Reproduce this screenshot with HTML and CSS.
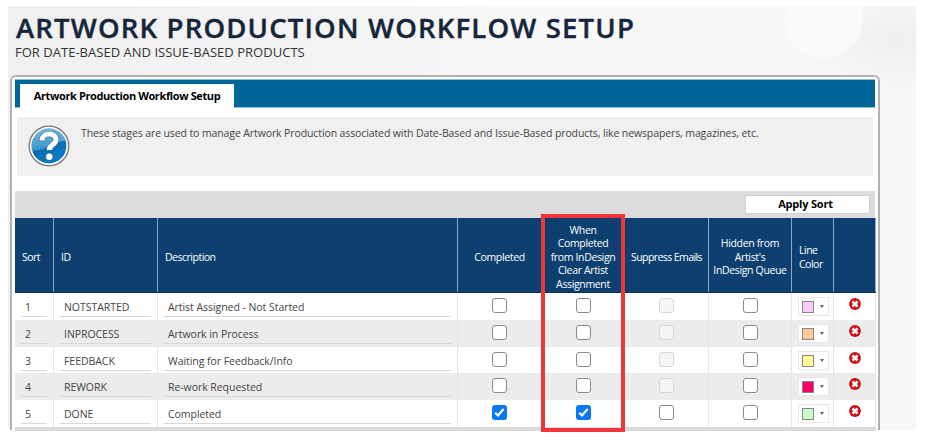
FILE: index.html
```
<!DOCTYPE html>
<html lang="en">
<head>
<meta charset="utf-8">
<title>Artwork Production Workflow Setup</title>
<link rel="stylesheet" href="styles.css">
</head>
<body>
<svg class="defs" width="0" height="0" aria-hidden="true">
  <symbol id="del" viewBox="0 0 12 12"><circle cx="6" cy="6" r="5.9" fill="#cf0d12"/><path d="M3.500 3.500 8.500 8.500M8.500 3.500 3.500 8.500" stroke="#fff" stroke-width="2.500"/></symbol>
  <symbol id="chk" viewBox="0 0 15 15"><path d="M3.2 7.8 6 10.5 11.6 4" fill="none" stroke="#fff" stroke-width="2.2"/></symbol>
</svg>
<main class="stage">
  <h1 class="title">ARTWORK PRODUCTION WORKFLOW SETUP</h1>
  <p class="subtitle">FOR DATE-BASED AND ISSUE-BASED PRODUCTS</p>
  <section class="panel">
    <nav class="tabs"><div class="tab"><span>Artwork Production Workflow Setup</span></div></nav>
    <div class="info">
      <svg class="help" viewBox="0 0 42 42">
        <defs>
          <linearGradient id="hg" x1="0" y1="0" x2="0.6" y2="1"><stop offset="0" stop-color="#2583c4"/><stop offset="0.5" stop-color="#0868b1"/><stop offset="1" stop-color="#0d7cc8"/></linearGradient>
          <linearGradient id="gl" x1="0" y1="0" x2="0" y2="1"><stop offset="0" stop-color="#8fd0ee"/><stop offset="1" stop-color="#4a9fd2"/></linearGradient>
        </defs>
        <circle cx="21" cy="21" r="19.8" fill="#fff" stroke="#747474" stroke-width="1.3"/>
        <circle cx="21" cy="21" r="17.4" fill="url(#hg)"/>
        <path d="M3.7 23A17.4 17.4 0 0 1 37.6 16C29 15.500 22 24 3.700 26Z" fill="url(#gl)" opacity=".75"/>
        <path d="M14 16C14 7 28.500 7 28 14.800C27.800 19.500 21.300 19.500 21.300 25.500" fill="none" stroke="#4b6b85" stroke-width="6.400"/>
        <circle cx="21.300" cy="32" r="3.800" fill="#4b6b85"/>
        <path d="M14 15.500C14 7 28.500 7 28 14.800C27.800 19.500 21.300 19.500 21.300 25" fill="none" stroke="#fff" stroke-width="5"/>
        <circle cx="21.300" cy="31.800" r="3.200" fill="#fff"/>
      </svg>
      <p>These stages are used to manage Artwork Production associated with Date-Based and Issue-Based products, like newspapers, magazines, etc.</p>
    </div>
    <div class="toolbar"><button class="apply">Apply Sort</button></div>
    <div class="grid">
      <div class="row head">
        <div>Sort</div><div>ID</div><div>Description</div>
        <div class="c">Completed</div>
        <div class="c">When<br>Completed<br>from InDesign<br>Clear Artist<br>Assignment</div>
        <div class="c">Suppress Emails</div>
        <div class="c">Hidden from<br>Artist's<br>InDesign Queue</div>
        <div>Line<br>Color</div><div></div>
      </div>
      <div class="row">
        <div><span class="field">1</span></div><div><span class="field">NOTSTARTED</span></div><div><span class="field">Artist Assigned - Not Started</span></div>
        <div class="c"><i class="box"></i></div><div class="c"><i class="box"></i></div><div class="c"><i class="box off"></i></div><div class="c"><i class="box"></i></div>
        <div class="pick"><span class="picker"><i class="swatch pink"></i><i class="arrow"></i></span></div><div class="c"><svg class="del"><use href="#del"/></svg></div>
      </div>
      <div class="row alt">
        <div><span class="field">2</span></div><div><span class="field">INPROCESS</span></div><div><span class="field">Artwork in Process</span></div>
        <div class="c"><i class="box"></i></div><div class="c"><i class="box"></i></div><div class="c"><i class="box off"></i></div><div class="c"><i class="box"></i></div>
        <div class="pick"><span class="picker"><i class="swatch orange"></i><i class="arrow"></i></span></div><div class="c"><svg class="del"><use href="#del"/></svg></div>
      </div>
      <div class="row short">
        <div><span class="field">3</span></div><div><span class="field">FEEDBACK</span></div><div><span class="field">Waiting for Feedback/Info</span></div>
        <div class="c"><i class="box"></i></div><div class="c"><i class="box"></i></div><div class="c"><i class="box off"></i></div><div class="c"><i class="box"></i></div>
        <div class="pick"><span class="picker"><i class="swatch yellow"></i><i class="arrow"></i></span></div><div class="c"><svg class="del"><use href="#del"/></svg></div>
      </div>
      <div class="row alt">
        <div><span class="field">4</span></div><div><span class="field">REWORK</span></div><div><span class="field">Re-work Requested</span></div>
        <div class="c"><i class="box"></i></div><div class="c"><i class="box"></i></div><div class="c"><i class="box off"></i></div><div class="c"><i class="box"></i></div>
        <div class="pick"><span class="picker"><i class="swatch red"></i><i class="arrow"></i></span></div><div class="c"><svg class="del"><use href="#del"/></svg></div>
      </div>
      <div class="row">
        <div><span class="field">5</span></div><div><span class="field">DONE</span></div><div><span class="field">Completed</span></div>
        <div class="c"><svg class="box on"><use href="#chk"/></svg></div><div class="c"><svg class="box on"><use href="#chk"/></svg></div><div class="c"><i class="box"></i></div><div class="c"><i class="box"></i></div>
        <div class="pick"><span class="picker"><i class="swatch green"></i><i class="arrow"></i></span></div><div class="c"><svg class="del"><use href="#del"/></svg></div>
      </div>
      <div class="foot"></div>
      <div class="highlight"></div>
    </div>
  </section>
</main>
</body>
</html>
```
FILE: styles.css
```
* { box-sizing: border-box; }
body { margin: 0; height: 448px; background: #fff; font-family: "Open Sans", "Noto Sans", sans-serif; color: #444; overflow: hidden; }
.defs { display: block; height: 0; }
.stage {
  width: 908px; height: 424px; margin: 6px 0 0 8px; padding-left: 2px;
  background:
    radial-gradient(circle 40px at 816px 14px, #fafafa 0 37px, transparent 40px),
    radial-gradient(ellipse 90px 50px at 890px 35px, #eeeeee, transparent),
    linear-gradient(90deg, #f0f0f0, #f3f3f3 30%, #f8f8f8 60%, #f7f7f7);
}
.title { margin: 0; padding: 4px 0 0 6px; height: 37px; font-size: 27.500px; line-height: 36px; font-weight: 600; letter-spacing: 1.180px; color: #16263a; -webkit-text-stroke: 0.400px #16263a; white-space: nowrap; }
.subtitle { margin: 0; padding-left: 5px; height: 32px; font-size: 13px; line-height: 18px; letter-spacing: 0.020px; color: #333; white-space: nowrap; }
.panel { width: 870px; height: 355px; background: #fff; border: 2px solid #b3b1b3; border-bottom: 0; border-radius: 6px 6px 0 0; padding: 2px 3px 0; }
.tabs { height: 29px; background: #006699; border: 1px solid #8fbcd5; border-left: 0; border-right: 0; padding: 4px 0 0 5px; display: flex; }
.tab { width: 214px; height: 24px; background: #fff; text-align: center; font-size: 11px; line-height: 24px; font-weight: 700; color: #000; letter-spacing: -0.390px; white-space: nowrap; }
.info { margin: 9px 2px 0; height: 59px; background: #f0f0f0; display: flex; padding: 8px 0 0 11px; font-size: 10.500px; }
.help { width: 42px; height: 42px; margin-right: 11px; flex: none; }
.info p { margin: 0; line-height: 17px; letter-spacing: -0.110px; white-space: nowrap; }
.toolbar { margin-top: 15px; height: 27px; background: #dcdcdc; padding: 4px 5px 0 0; display: flex; justify-content: flex-end; }
.apply { width: 125px; height: 19px; border: 1px solid #d0d0d0; background: #fff; font: 700 11px/16px "Open Sans", "Noto Sans", sans-serif; letter-spacing: -0.200px; color: #000; padding: 0 4px 1px 0; }
.grid { position: relative; width: 861px; }
.row { display: grid; grid-template-columns: 39px 104px 300px 84px 83px 84px 83px 42px 42px; height: 27px; background: #fff; }
.row.alt { background: #ececec; }
.row.short { height: 26px; }
.row > div { border-right: 1px solid #e6e6e6; padding: 0 6px; min-width: 0; }
.row > .c { padding: 0; display: flex; justify-content: center; }
.head.row { height: 75px; background: #0d3f70; color: #fff; font-size: 10.500px; line-height: 13.400px; letter-spacing: -0.500px; border-bottom: 1px solid #0a3058; }
.head.row > div { display: flex; align-items: center; border-right-color: #8ea6bf; padding-top: 5px; padding-left: 7px; white-space: nowrap; }
.head.row > .c { text-align: center; padding-left: 0; letter-spacing: -0.350px; }
.head.row > .c:nth-child(6) { letter-spacing: -0.580px; }
.field { display: block; height: 24px; padding-left: 4px; border-bottom: 1px solid #d8d8d8; font-size: 10.500px; line-height: 29px; letter-spacing: -0.050px; white-space: nowrap; }
.box { display: block; width: 15px; height: 15px; margin-top: 5px; border: 1.500px solid #8b8b8b; border-radius: 3px; background: #fff; }
.box.off { border-color: #d8d8d8; background: #f5f5f5; }
.box.on { border: 0; background: #0877f8; }
.row > .pick { padding: 4px 0 0 6px; }
.picker { display: flex; align-items: center; gap: 6px; width: 31px; height: 19px; border: 1px solid #e7e7e7; background: #fff; padding-left: 3px; }
.swatch { width: 12px; height: 12px; border: 1px solid #888; }
.pink { background: #fcccfb; } .orange { background: #fecb98; } .yellow { background: #fffd98; } .red { background: #fb0066; } .green { background: #ccfdcc; }
.arrow { border: 2.500px solid transparent; border-top: 3px solid #666; border-bottom: 0; }
.del { width: 12px; height: 12px; margin-top: 5px; }
.foot { height: 4px; background: #dadada; }
.highlight { position: absolute; left: 526px; top: -4px; width: 84px; height: 218px; border: 4px solid #ee353b; }
```
